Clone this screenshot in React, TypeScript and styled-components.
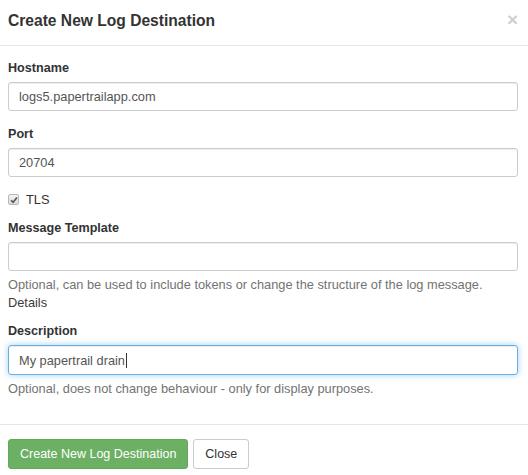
import React from "react";
import styled, { createGlobalStyle } from "styled-components";

const Global = createGlobalStyle`
  html, body { margin: 0; padding: 0; background: #fff; }
  body { font-family: "Liberation Sans", Arial, sans-serif; color: #333; }
  * { box-sizing: border-box; }
`;

const Modal = styled.div`
  width: 528px;
  height: 475px;
  background: #fff;
  display: flex;
  flex-direction: column;
`;

const Header = styled.div`
  display: flex;
  align-items: flex-start;
  justify-content: space-between;
  height: 46px;
  padding: 9px 10px 0 8px;
  border-bottom: 1px solid #e5e5e5;
`;

const Title = styled.h4`
  margin: 0;
  font-size: 15.6px;
  line-height: 24px;
  font-weight: 700;
  color: #333;
`;

const CloseX = styled.span`
  font-size: 19px;
  font-weight: 700;
  line-height: 1;
  color: #cfcfcf;
  margin-top: 1px;
`;

const Body = styled.div`
  flex: 1;
  padding: 13px 10px 0 8px;
  display: flex;
  flex-direction: column;
`;

const Group = styled.div<{ $gap?: number }>`
  display: flex;
  flex-direction: column;
  margin-bottom: ${(p) => p.$gap ?? 14}px;
`;

const Label = styled.label`
  font-size: 12.6px;
  line-height: 18px;
  font-weight: 700;
  margin-bottom: 5px;
  color: #333;
`;

const Field = styled.div<{ $focused?: boolean; $h?: number }>`
  height: ${(p) => p.$h ?? 29}px;
  border: 1px solid ${(p) => (p.$focused ? "#66afe9" : "#cccccc")};
  border-radius: 3px;
  padding: 0 10px;
  display: flex;
  align-items: center;
  font-size: 12.8px;
  color: #555;
  box-shadow: ${(p) =>
    p.$focused
      ? "inset 0 1px 1px rgba(0,0,0,.075), 0 0 6px rgba(102,175,233,.6)"
      : "inset 0 1px 1px rgba(0,0,0,.075)"};
`;

const Caret = styled.span`
  display: inline-block;
  width: 1px;
  height: 15px;
  background: #333;
  margin-left: 1px;
`;

const Help = styled.p`
  margin: 5px 0 0;
  font-size: 12.8px;
  line-height: 18px;
  color: #737373;
`;

const HelpLink = styled.span`
  color: #3a3a3a;
`;

const CheckRow = styled.div`
  display: flex;
  align-items: flex-start;
  height: 18px;
  margin-bottom: 10px;
  font-size: 12.8px;
  line-height: 18px;
  color: #333;
`;

const Box = styled.span`
  width: 11px;
  height: 11px;
  margin-top: 3px;
  margin-right: 7px;
  border: 1px solid #b8b8b8;
  border-radius: 2px;
  background: linear-gradient(#f2f2f2, #dcdcdc);
  display: flex;
  align-items: center;
  justify-content: center;
`;

const Footer = styled.div`
  border-top: 1px solid #e5e5e5;
  padding: 14px 8px 0;
  height: 51px;
  display: flex;
  gap: 5px;
  align-items: flex-start;
`;

const Button = styled.button<{ $primary?: boolean }>`
  height: 30px;
  padding: 0 11px;
  font-family: "Liberation Sans", Arial, sans-serif;
  font-size: 12.5px;
  border-radius: 3px;
  border: 1px solid ${(p) => (p.$primary ? "#62a95a" : "#cccccc")};
  background: ${(p) => (p.$primary ? "#6cb063" : "#fff")};
  color: ${(p) => (p.$primary ? "#fff" : "#333")};
`;

export default function App() {
  return (
    <>
      <Global />
      <Modal>
        <Header>
          <Title>Create New Log Destination</Title>
          <CloseX>×</CloseX>
        </Header>
        <Body>
          <Group>
            <Label>Hostname</Label>
            <Field>logs5.papertrailapp.com</Field>
          </Group>
          <Group>
            <Label>Port</Label>
            <Field>20704</Field>
          </Group>
          <CheckRow>
            <Box>
              <svg width="8" height="8" viewBox="0 0 8 8">
                <path d="M1 4.2 L3.1 6.3 L7 1.4" fill="none" stroke="#555" strokeWidth="1.6" />
              </svg>
            </Box>
            TLS
          </CheckRow>
          <Group $gap={10}>
            <Label>Message Template</Label>
            <Field />
            <Help>
              Optional, can be used to include tokens or change the structure of the log message.
              <br />
              <HelpLink>Details</HelpLink>
            </Help>
          </Group>
          <Group>
            <Label>Description</Label>
            <Field $focused $h={30}>
              My papertrail drain
              <Caret />
            </Field>
            <Help>Optional, does not change behaviour - only for display purposes.</Help>
          </Group>
        </Body>
        <Footer>
          <Button $primary>Create New Log Destination</Button>
          <Button>Close</Button>
        </Footer>
      </Modal>
    </>
  );
}
